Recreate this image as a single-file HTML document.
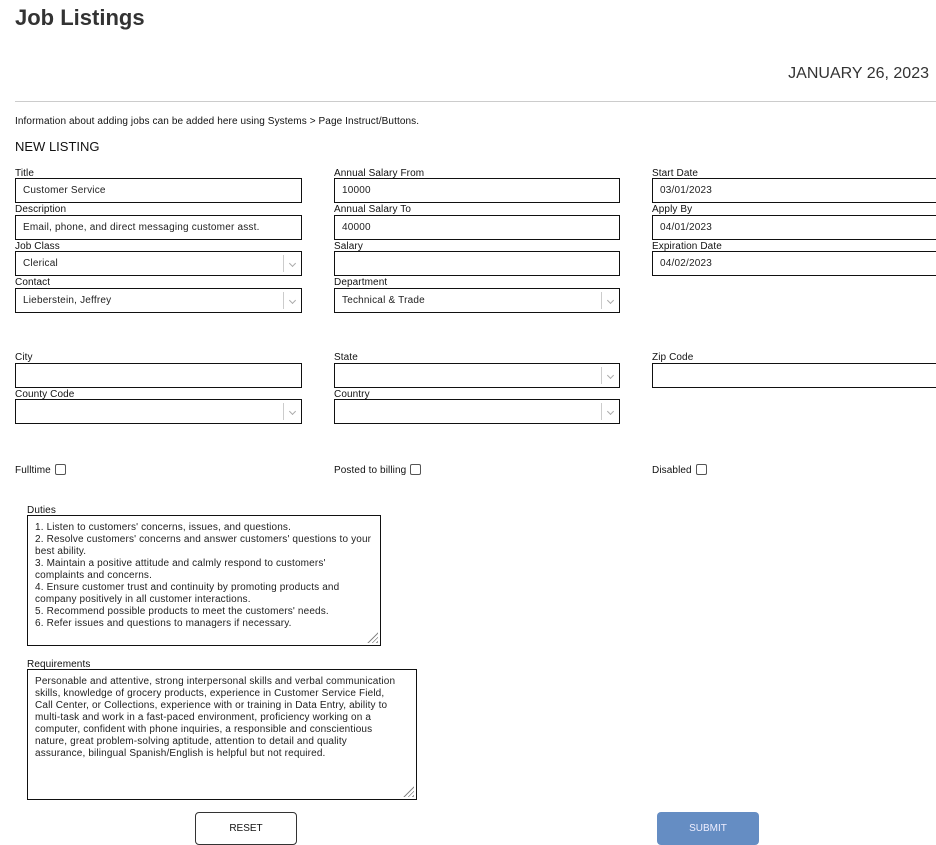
<!DOCTYPE html>
<html><head><style>
body{margin:0;width:936px;height:845px;overflow:hidden;background:#fff;font-family:"Liberation Sans",Arial,sans-serif;color:#222;position:relative}
.a{position:absolute}
.l{position:absolute;font-size:10px;color:#111;line-height:11px;letter-spacing:0.1px}
.i{position:absolute;box-sizing:border-box;border:1px solid #111;height:25px;font-size:10px;line-height:24px;padding-left:7px;background:#fff;letter-spacing:0.2px}
.s::after{content:"";position:absolute;right:17px;top:3px;bottom:3px;border-left:1px solid #ccc}
.s::before{content:"";position:absolute;right:6px;top:9px;width:4px;height:4px;border-right:1px solid #aaa;border-bottom:1px solid #aaa;transform:rotate(45deg)}
.c{display:inline-block;width:9px;height:9px;border:1px solid #555;border-radius:2px;vertical-align:-2px;margin-left:4px}
.ta{position:absolute;box-sizing:border-box;border:1px solid #111;font-size:10px;line-height:12px;padding:6px 7px;letter-spacing:0.15px;white-space:nowrap;overflow:hidden}
.g{position:absolute;right:2px;bottom:2px;width:11px;height:11px;background:repeating-linear-gradient(135deg,transparent 0 2px,#888 2px 3px);clip-path:polygon(100% 0,100% 100%,0 100%)}
</style></head><body>
<div class="a" style="left:15px;top:5px;font-size:22px;font-weight:bold;color:#333">Job Listings</div>
<div class="a" style="right:7px;top:65px;font-size:16px;color:#333">JANUARY 26, 2023</div>
<div class="a" style="left:15px;top:101px;width:921px;border-top:1px solid #ccc"></div>
<div class="l" style="left:15px;top:116px">Information about adding jobs can be added here using Systems &gt; Page Instruct/Buttons.</div>
<div class="a" style="left:15px;top:139px;font-size:13px;color:#111">NEW LISTING</div>

<div class="l" style="left:15px;top:168px">Title</div><div class="i" style="left:15px;top:178px;width:287px">Customer Service</div>
<div class="l" style="left:15px;top:204px">Description</div><div class="i" style="left:15px;top:215px;width:287px">Email, phone, and direct messaging customer asst.</div>
<div class="l" style="left:15px;top:241px">Job Class</div><div class="i s" style="left:15px;top:251px;width:287px">Clerical</div>
<div class="l" style="left:15px;top:277px">Contact</div><div class="i s" style="left:15px;top:288px;width:287px">Lieberstein, Jeffrey</div>

<div class="l" style="left:334px;top:168px">Annual Salary From</div><div class="i" style="left:334px;top:178px;width:286px">10000</div>
<div class="l" style="left:334px;top:204px">Annual Salary To</div><div class="i" style="left:334px;top:215px;width:286px">40000</div>
<div class="l" style="left:334px;top:241px">Salary</div><div class="i" style="left:334px;top:251px;width:286px"></div>
<div class="l" style="left:334px;top:277px">Department</div><div class="i s" style="left:334px;top:288px;width:286px">Technical &amp; Trade</div>

<div class="l" style="left:652px;top:168px">Start Date</div><div class="i" style="left:652px;top:178px;width:290px">03/01/2023</div>
<div class="l" style="left:652px;top:204px">Apply By</div><div class="i" style="left:652px;top:215px;width:290px">04/01/2023</div>
<div class="l" style="left:652px;top:241px">Expiration Date</div><div class="i" style="left:652px;top:251px;width:290px">04/02/2023</div>

<div class="l" style="left:15px;top:352px">City</div><div class="i" style="left:15px;top:363px;width:287px"></div>
<div class="l" style="left:15px;top:389px">County Code</div><div class="i s" style="left:15px;top:399px;width:287px"></div>
<div class="l" style="left:334px;top:352px">State</div><div class="i s" style="left:334px;top:363px;width:286px"></div>
<div class="l" style="left:334px;top:389px">Country</div><div class="i s" style="left:334px;top:399px;width:286px"></div>
<div class="l" style="left:652px;top:352px">Zip Code</div><div class="i" style="left:652px;top:363px;width:290px"></div>

<div class="l" style="left:15px;top:464px">Fulltime<span class="c"></span></div>
<div class="l" style="left:334px;top:464px">Posted to billing<span class="c"></span></div>
<div class="l" style="left:652px;top:464px">Disabled<span class="c"></span></div>

<div class="l" style="left:27px;top:505px">Duties</div>
<div class="ta" style="left:27px;top:515px;width:354px;height:131px">1. Listen to customers' concerns, issues, and questions.<br>2. Resolve customers' concerns and answer customers' questions to your<br>best ability.<br>3. Maintain a positive attitude and calmly respond to customers'<br>complaints and concerns.<br>4. Ensure customer trust and continuity by promoting products and<br>company positively in all customer interactions.<br>5. Recommend possible products to meet the customers' needs.<br>6. Refer issues and questions to managers if necessary.<div class="g"></div></div>

<div class="l" style="left:27px;top:659px">Requirements</div>
<div class="ta" style="left:27px;top:669px;width:390px;height:131px">Personable and attentive, strong interpersonal skills and verbal communication<br>skills, knowledge of grocery products, experience in Customer Service Field,<br>Call Center, or Collections, experience with or training in Data Entry, ability to<br>multi-task and work in a fast-paced environment, proficiency working on a<br>computer, confident with phone inquiries, a responsible and conscientious<br>nature, great problem-solving aptitude, attention to detail and quality<br>assurance, bilingual Spanish/English is helpful but not required.<div class="g"></div></div>

<div class="a" style="left:195px;top:812px;width:102px;height:33px;box-sizing:border-box;border:1px solid #333;border-radius:4px;font-size:10px;line-height:32px;text-align:center;color:#111">RESET</div>
<div class="a" style="left:657px;top:812px;width:102px;height:33px;border-radius:4px;background:#658dc3;font-size:10px;line-height:33px;text-align:center;color:#eef">SUBMIT</div>
</body></html>
